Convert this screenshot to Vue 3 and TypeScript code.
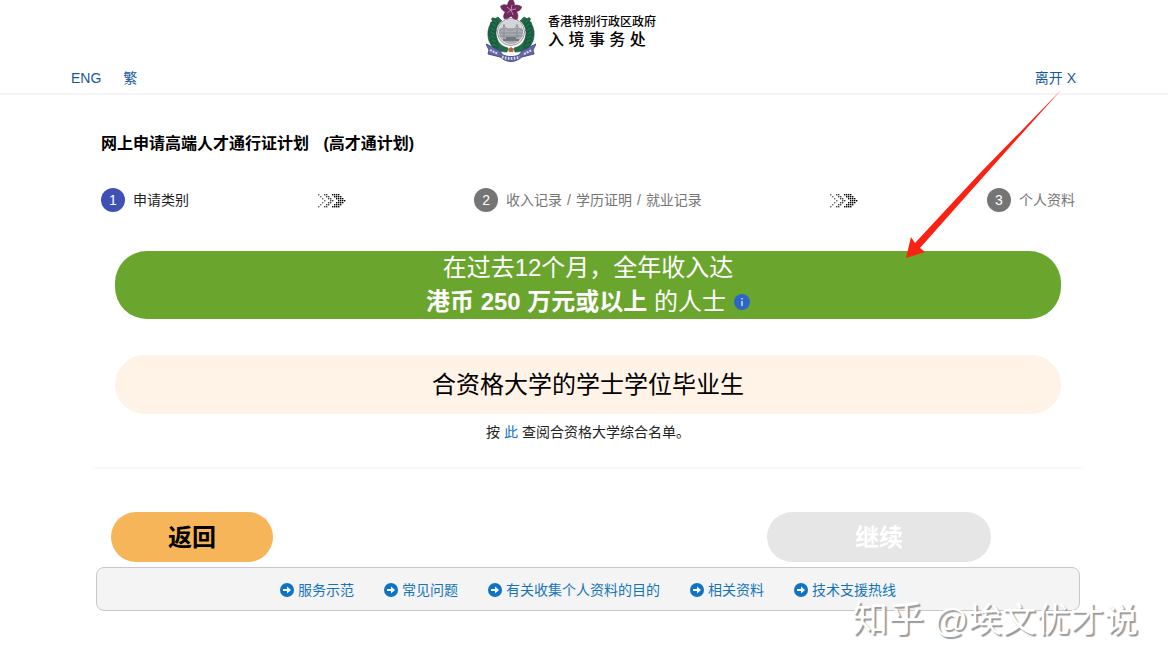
<script setup lang="ts">
interface Step { n: number; parts: string[]; active: boolean }

const steps: Step[] = [
  { n: 1, parts: ['申请类别'], active: true },
  { n: 2, parts: ['收入记录', '学历证明', '就业记录'], active: false },
  { n: 3, parts: ['个人资料'], active: false },
]

const links: string[] = ['服务示范', '常见问题', '有关收集个人资料的目的', '相关资料', '技术支援热线']

// Dotted triple chevron: one thin grey line of dots, then two thicker and darker ones.
const dots: { x: number; y: number; c: string }[] = []
const chevrons = [
  { x: 0, cols: 1, c: '#666666' },
  { x: 6, cols: 2, c: '#444444' },
  { x: 14, cols: 4, c: '#000000' },
]
for (const ch of chevrons) {
  for (let r = 0; r < 7; r++) {
    const slant = 3 - Math.abs(r - 3)
    for (let k = 0; k < ch.cols; k++) {
      dots.push({ x: ch.x + slant * 2 + k * 2, y: 2 + r * 2, c: ch.c })
    }
  }
}
const petals: number[] = [0, 72, 144, 216, 288]
const leaves: number[] = [0, 1, 2, 3, 4, 5, 6]
</script>

<template>
  <div class="page">
    <header class="top">
      <div class="brand">
        <svg class="crest" viewBox="0 0 50 62" aria-hidden="true">
          <g fill="#1f6d4b" stroke="#124a33" stroke-width="0.6">
            <path d="M12 17C3 21 0 32 3 41c3 7 9 11 18 11l1-4C13 46 10 39 10 32c0-5 3-9 6-11z" />
            <path d="M38 17c9 4 12 15 9 24-3 7-9 11-18 11l-1-4c9-2 12-9 12-16 0-5-3-9-6-11z" />
            <g v-for="i in leaves" :key="i">
              <ellipse :cx="6 + Math.abs(i - 3) * 0.9" :cy="21 + i * 4" rx="4" ry="1.8" :transform="`rotate(${48 - i * 4} ${6 + Math.abs(i - 3) * 0.9} ${21 + i * 4})`" />
              <ellipse :cx="44 - Math.abs(i - 3) * 0.9" :cy="21 + i * 4" rx="4" ry="1.8" :transform="`rotate(${-48 + i * 4} ${44 - Math.abs(i - 3) * 0.9} ${21 + i * 4})`" />
            </g>
          </g>
          <circle cx="25" cy="32" r="13" fill="#a9adb2" stroke="#f1eeee" stroke-width="2" />
          <circle cx="25" cy="32" r="13.500" fill="none" stroke="#7d6a6c" stroke-width="0.700" />
          <path d="M13.500 28a12 12 0 0 1 23 0z" fill="#d3d6d9" />
          <path d="M13 36h24M13 33h24M18 24v14M31 24v14M13 31c3-1 4-3 5-6 3 7 10 7 13 0 1 3 3 5 6 6" fill="none" stroke="#83898f" stroke-width="0.800" />
          <path d="M17 40h16M20 38h10" fill="none" stroke="#5f666d" stroke-width="1.400" />
          <path d="M0 44l13 6 4 5c5 2 11 2 16 0l4-5 13-6-3 6 1 4-12 3c-7 6-15 6-22 0L2 54l1-4z" fill="#6468a8" stroke="#343970" stroke-width="0.800" />
          <path d="M4 50l8 4M38 54l8-4" stroke="#d8daf0" stroke-width="2" stroke-dasharray="2 1" />
          <path d="M16 57c6 2 12 2 18 0" fill="none" stroke="#d0d3ec" stroke-width="3" stroke-dasharray="1.500 1.500" />
          <path d="M22 49l3-2 3 2-1 3h-4z" fill="#b5643c" />
          <g fill="#74295f" stroke="#4d153f" stroke-width="0.400">
            <path v-for="a in petals" :key="a" d="M24 10c-5-3-4-8-1-11 4 1 6 7 3 11z" :transform="`rotate(${a + 12} 25 10)`" />
          </g>
          <path d="M25 10l1-5M25 10l5-1M25 10l2 5M25 10l-4 3M25 10l-4-3" stroke="#e3b4d1" stroke-width="0.700" />
        </svg>
        <div class="brand-text">
          <span class="gov">香港特别行政区政府</span>
          <span class="dept">入 境 事 务 处</span>
        </div>
      </div>
      <nav class="top-nav">
        <div class="langs">
          <a href="#eng">ENG</a>
          <a href="#trad">繁</a>
        </div>
        <a href="#exit">离开 X</a>
      </nav>
    </header>

    <main class="main">
      <h1>网上申请高端人才通行证计划 <span class="short">(高才通计划)</span></h1>

      <div class="steps">
        <template v-for="(s, i) in steps" :key="s.n">
          <svg v-if="i > 0" class="chev" viewBox="0 0 28 16" aria-hidden="true">
            <rect v-for="(d, j) in dots" :key="j" :x="d.x" :y="d.y" width="1.400" height="1.400" :fill="d.c" />
          </svg>
          <div class="step" :class="{ active: s.active }">
            <span class="num">{{ s.n }}</span>
            <span><template v-for="(p, k) in s.parts" :key="p"><span v-if="k > 0" class="sep">/</span>{{ p }}</template></span>
          </div>
        </template>
      </div>

      <section class="choices">
        <button type="button" class="choice income">
          <span>在过去12个月，全年收入达</span>
          <span class="line"><span><b>港币 250 万元或以上</b> 的人士</span>
            <svg class="info" viewBox="0 0 16 16" aria-hidden="true">
              <circle cx="8" cy="8" r="8" fill="#2d66c6" />
              <path d="M7.300 4h1.500v1.500H7.300zM7.300 7h1.500v5H7.300z" fill="#c5dbff" />
            </svg>
          </span>
        </button>
        <button type="button" class="choice degree">合资格大学的学士学位毕业生</button>
        <p class="note">按 <a href="#list">此</a> 查阅合资格大学综合名单。</p>
      </section>

      <div class="actions">
        <button type="button" class="back">返回</button>
        <button type="button" class="next" disabled>继续</button>
      </div>

      <footer class="links">
        <a v-for="l in links" :key="l" href="#help">
          <svg viewBox="0 0 14 14" aria-hidden="true">
            <circle cx="7" cy="7" r="7" fill="#0f73c5" />
            <path d="M3 6h4V3.500L11 7l-4 3.500V8H3z" fill="#fff" />
          </svg>{{ l }}
        </a>
      </footer>
    </main>

    <svg class="arrow" viewBox="0 0 158 170" aria-hidden="true">
      <path d="M157 1L76 84 10 155 6 149 1 170 20 164 15 160 79 88z" fill="#fb2214" />
    </svg>
    <div class="watermark"><span class="site">知乎</span> @埃文优才说</div>
  </div>
</template>

<style>
body {
  margin: 0;
  background: #fff;
}
</style>

<style scoped>
.page {
  position: relative;
  min-height: 100vh;
  overflow: hidden;
  font-family: "Liberation Sans", "Noto Sans CJK SC", sans-serif;
  font-size: 14px;
  line-height: 20px;
  color: #222;
}
a {
  text-decoration: none;
}
button {
  font: inherit;
  border: 0;
  padding: 0;
  cursor: pointer;
}
.top {
  border-bottom: 2px solid #f5f5f7;
}
.brand {
  display: flex;
  gap: 12px;
  width: 196px;
  margin: 0 auto;
}
.crest {
  width: 50px;
  height: 62px;
}
.brand-text {
  display: flex;
  flex-direction: column;
  padding-top: 14px;
  color: #000;
  white-space: nowrap;
}
.gov {
  font-size: 12px;
  line-height: 16px;
  font-weight: 500;
}
.dept {
  font-size: 16px;
  line-height: 20px;
  font-weight: 500;
}
.top-nav {
  display: flex;
  justify-content: space-between;
  padding: 6px 92px 5px 71px;
}
.top-nav a {
  color: #165a9c;
}
.langs {
  display: flex;
  gap: 22px;
}
.main {
  padding: 39px 84px 0 92px;
}
h1 {
  margin: 0 9px;
  font-size: 16px;
  line-height: 20px;
  color: #000;
}
.short {
  margin-left: 10px;
}
.steps {
  display: flex;
  justify-content: space-between;
  align-items: center;
  margin: 34px 9px 0;
}
.step {
  display: flex;
  align-items: center;
  gap: 8px;
  color: #757575;
}
.active {
  color: #222;
}
.num {
  width: 24px;
  line-height: 24px;
  border-radius: 50%;
  background: #757575;
  color: #fff;
  text-align: center;
}
.active .num {
  background: #3f51b5;
}
.sep {
  margin: 0 5px;
}
.chev {
  width: 28px;
  height: 16px;
}
.choices {
  display: flex;
  flex-direction: column;
  margin-top: 39px;
  padding: 0 23px 25px;
  border-bottom: 2px solid #f9f9f9;
  border-radius: 4px;
}
.choice {
  border-radius: 32px;
  font-size: 24px;
  line-height: 34px;
}
.income {
  display: flex;
  flex-direction: column;
  align-items: center;
  background: #6aa52d;
  color: #fff;
}
.line {
  display: flex;
  align-items: center;
  gap: 8px;
}
.info {
  width: 16px;
  height: 16px;
}
.degree {
  margin-top: 36px;
  padding: 13px 0 12px;
  background: #fff2e6;
  color: #000;
}
.note {
  margin: 8px 0 0;
  text-align: center;
}
.note a {
  color: #0f73c5;
}
.actions {
  display: flex;
  justify-content: space-between;
  margin-top: 43px;
  padding: 0 93px 0 19px;
}
.actions button {
  padding-top: 2px;
  border-radius: 25px;
  font-size: 24px;
  line-height: 48px;
  font-weight: 700;
}
.back {
  width: 162px;
  background: #f6b559;
  color: #000;
}
.next {
  width: 224px;
  background: #e6e6e6;
  color: #fff;
}
.links {
  display: flex;
  justify-content: center;
  gap: 30px;
  margin: 5px 4px 0;
  padding: 12px 0 10px;
  border: 1px solid #c8c8c8;
  border-radius: 8px;
  background: #f4f4f4;
}
.links a {
  display: flex;
  align-items: center;
  gap: 4px;
  color: #1474bb;
}
.links svg {
  width: 14px;
  height: 14px;
}
.arrow {
  position: absolute;
  top: 88px;
  right: 105px;
  width: 158px;
  height: 170px;
  pointer-events: none;
}
.watermark {
  position: absolute;
  right: 30px;
  top: 600px;
  font-size: 34px;
  line-height: 40px;
  color: #fff;
  text-shadow: 2px 2px 1px #999;
  pointer-events: none;
}
.site {
  font-size: 36px;
}
</style>
